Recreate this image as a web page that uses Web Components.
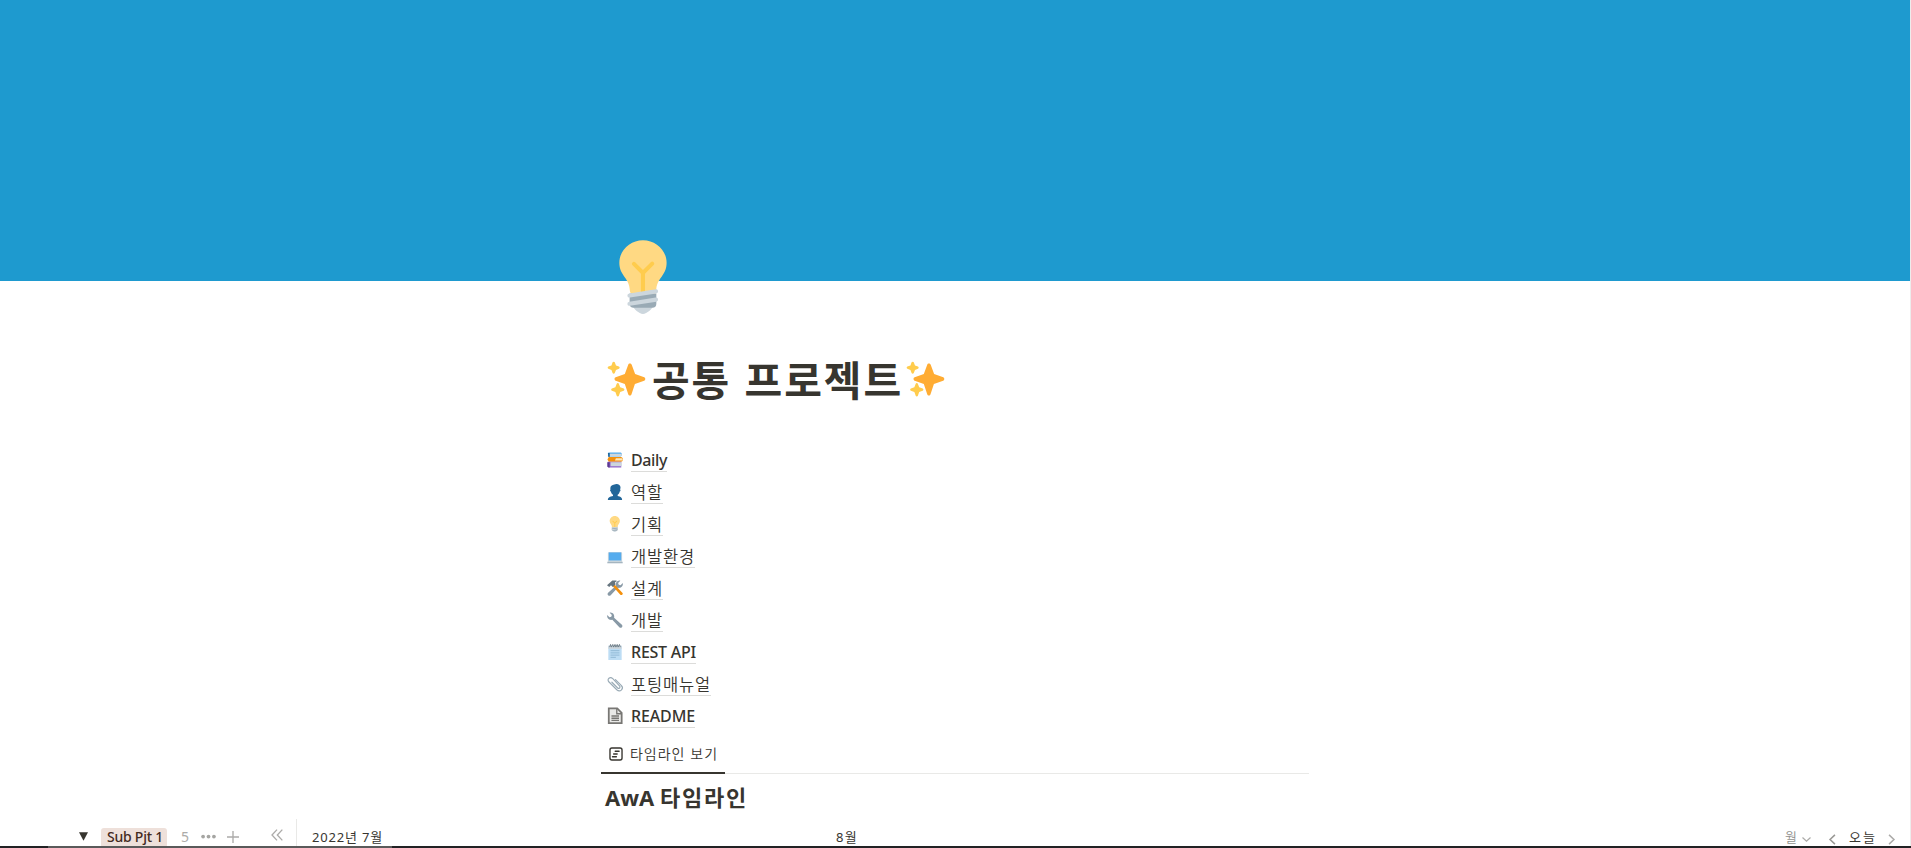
<!DOCTYPE html>
<html lang="ko"><head><meta charset="utf-8"><title>공통 프로젝트</title>
<style>
html,body{margin:0;height:100%;overflow:hidden;background:#fff}
body{font-family:"Noto Sans","Noto Sans CJK KR",sans-serif;color:#37352f}
</style></head><body>
<project-page></project-page>
<script>
const define=(name,html,setup)=>{
  const t=document.createElement('template');t.innerHTML=html;
  customElements.define(name,class extends HTMLElement{
    connectedCallback(){
      if(this.shadowRoot)return;
      this.attachShadow({mode:'open'}).append(t.content.cloneNode(true));
      if(setup)setup(this,this.shadowRoot);
    }
  });
};
const bulb='<path fill="#ffd983" d="M29 11.06c0 6.44-5 7.44-5 13.44 0 3.1-3.3 3.5-6.5 3.5-2.1 0-6.4-.8-6.4-3.5C11.1 18.5 6 17.5 6 11.06 6 5.03 11.3.14 17.5.14S29 5.03 29 11.06z"/><path fill="#ccd6dd" d="M22.2 32.5c0 .8-2.8 3.5-4.7 3.5s-4.7-2.7-4.7-3.5c0-.8 2.8-.5 4.7-.5s4.7-.3 4.7.5z"/><path fill="#ffcc4d" d="M22.7 10.8a1 1 0 0 0-1.4 0l-3.8 3.8-3.8-3.8a1 1 0 0 0-1.4 1.4l4.2 4.2V27h2V16.400l4.200-4.200a1 1 0 0 0 0-1.400z"/><path fill="#99aab5" d="M24 31a2 2 0 0 1-2 2h-9a2 2 0 0 1-2-2v-5h13z"/><path fill="#ccd6dd" d="M11 32a1 1 0 0 1-.16-2l12.870-2a1 1 0 0 1 .3 2l-12.840 2zm0-4a1 1 0 0 1-.16-2l12.870-2a1 1 0 0 1 .3 2l-12.840 2z"/>';
const wrench='<path fill="#8899a6" d="M27.700 34.300c2 2 4.500 1.500 5.800 0 1.500-1.500 1.800-4 0-5.800L16 13c1-4-.5-8.500-4-10.500-2-1.500-4.500-1.500-6-1l5 5-1.500 4-4 1.500-5-5c-.5 2-.3 4.500 1 6.500 2 3.500 6.500 5 10.500 4z"/>';
const icons={
bulb,
sparkles:'<path fill="#ffac33" d="m34.300 16.900-8.900-3.300-3.300-8.900C21.700 3.900 21.100 3.400 20.300 3.400s-1.400.5-1.600 1.200l-3.300 9-8.900 3.300c-.7.200-1.100.8-1.100 1.600s.4 1.400 1.100 1.600l8.900 3.300 3.300 9.900c.2.700.9 1.200 1.600 1.200s1.400-.5 1.600-1.200l3.300-9.900 9-3.300c.700-.2 1.100-.900 1.100-1.600s-.4-1.400-1-1.600z"/><path fill="#ffcc4d" d="M14.300 27.800 10.900 26.500 9.600 23.100c-.3-.9-1.800-.9-2.100 0L6.200 26.500l-3.400 1.300c-.9.300-.9 1.800 0 2.100l3.400 1.300 1.300 3.600c.3.900 1.800.9 2.100 0l1.300-3.600 3.400-1.300c.9-.3.9-1.800 0-2.100zM9.700 6.400 6.800 5.300 5.600 2.300c-.3-.9-1.800-.9-2.100 0L2.400 5.300-.6 6.400c-.9.300-.9 1.800 0 2.100l3 1.200 1.100 3c.3.900 1.800.9 2.100 0l1.200-3 2.900-1.200c.9-.3.9-1.800 0-2.100z"/>',
books:'<path fill="#55acee" d="M3 1h28l2 2v5l-2 2H5L2 8z"/><path fill="#ccd6dd" d="M6 4h27v5H6z"/><path fill="#226699" d="M2 2h4v9H3z"/><path fill="#f4900c" d="M4 11h28l4 3-1 6-3 2H4l-3-5z"/><path fill="#ffe8b6" d="M20 14h15v5H18z"/><path fill="#9266cc" d="M2 22h30v13H4l-3-3V24z"/><path fill="#ccd6dd" d="M8 23h25v9H8z"/><path fill="#5c3b91" d="M1 23h5v12H3l-2-3z"/>',
person:'<path fill="#226699" d="M24 26.800v-2.600c2.200-1.300 4.200-4.100 4.600-7.300.700-.1 1.600-1 1.800-2.500.200-1.400-.5-2-1-2.100.600-1.400 1-2.700 1-4.200 0-5-4-8.100-9-8.100-2 0-3.500.5-4.800 1.200C11 2 7.500 5 7.500 9.300c0 1 .2 2 .5 3-.6.100-1.300.9-1.100 2.200.2 1.400 1.100 2.300 1.800 2.400.5 3.200 2.500 6 4.800 7.300v2.600C7 28 2 29.500 2 36h32c0-6.500-4-8-10-9.200z"/>',
laptop:'<path fill="#ccd6dd" d="M34 30H2l-2 3c0 1 1 2 2 2h32c1 0 2-1 2-2z"/><path fill="#99aab5" d="M2 31h32l1 2H1z"/><path fill="#ccd6dd" d="M4 9h28l2 2v19H2V11z"/><path fill="#55acee" d="M4 10h28v18H4z"/>',
tools:'<g transform="matrix(-1 0 0 1 36 0)">'+wrench+'</g><path fill="#f4900c" d="m13 14 4-4 18 19c2 2-2 7-5 4z"/><path fill="#66757f" d="M0 12 12 1h9l1 2-4 2 1 5-6 6-4-4-4 4z"/>',
wrench,
notepad:'<path fill="#bdddf4" d="M3 4h30v32H3z"/><path fill="#ccd6dd" d="M3 4h30v7H3z"/><path stroke="#8cb4d2" stroke-width="2" d="M8 15h20M8 20h20M8 25h20M8 30h12"/><path stroke="#66757f" stroke-width="2" fill="none" d="m6 7 2-6 2 6 3-6 2 6 3-6 2 6 3-6 2 6 3-6 2 6"/>',
clip:'<path fill="none" stroke="#99aab5" stroke-width="2.600" stroke-linecap="round" d="M11 14l13 13c4 3 7-2 4-5L13 6C7 0-1 7 4 13l18 18c8 7 17-3 10-10L19 8"/>',
page:'<path fill="#e9e9e7" stroke="#787774" stroke-width="4" d="M4 1h19l10 10v23H4z"/><path fill="none" stroke="#787774" stroke-width="3" d="M22 2v11h11M10 18h17M10 23h17M10 28h17"/>',
timeline:'<rect x="2.500" y="2.500" width="31" height="31" rx="5" fill="none" stroke="#37352f" stroke-width="3.500"/><path stroke="#37352f" stroke-width="3.500" stroke-linecap="round" d="M16 11h10M12 18h9M9 25h10"/>',
tri:'<path fill="#37352f" d="M0 1h36L18 35z"/>',
dots:'<g fill="#a5a5a2"><circle cx="5" cy="18" r="4.500"/><circle cx="18" cy="18" r="4.500"/><circle cx="31" cy="18" r="4.500"/></g>',
plus:'<path stroke="#acaba9" stroke-width="4" d="M18 0v36M0 18h36"/>',
dleft:'<path fill="none" stroke="#acaba9" stroke-width="4" d="M18 2 3 18l15 16M34 2 19 18l15 16"/>',
down:'<path fill="none" stroke="#acaba9" stroke-width="5" d="m2 10 16 15 16-15"/>',
left:'<path fill="none" stroke="#999895" stroke-width="5" d="M26 3 10 18l16 15"/>',
right:'<path fill="none" stroke="#acaba9" stroke-width="5" d="m10 3 16 15-16 15"/>'};
define('ui-icon','<style>:host{display:block;flex:none;width:var(--s,16px);height:var(--s,16px)}svg{display:block;width:100%;height:100%;overflow:visible}</style><svg viewBox="0 0 36 36"></svg>',(h,r)=>{
  r.querySelector('svg').innerHTML=icons[h.getAttribute('name')]||'';
  if(h.hasAttribute('size'))h.style.setProperty('--s',h.getAttribute('size')+'px');
});
/* A label that tracks its letters out to fill a given advance width. */
define('set-label','<style>:host{display:block;flex:none;white-space:pre}span{display:inline-block}</style><span><slot></slot></span>',(h,r)=>{
  const w=+h.getAttribute('w'),s=r.querySelector('span'),n=[...h.textContent].length;
  h.style.width=w+'px';
  s.style.letterSpacing=(w-s.getBoundingClientRect().width)/n+'px';
});
define('page-link',`<style>
:host{display:flex;height:32px;align-items:flex-start;font-size:16px;line-height:24px}
ui-icon{margin:6px 8px 0 0}
.t{height:24px;margin-top:2px;border-bottom:1px solid #dcdcda;box-sizing:border-box;font-weight:500}
:host([ko]) .t{font-family:"Noto Sans CJK KR",sans-serif;font-weight:350;font-size:16.500px}
</style><ui-icon></ui-icon><div class="t"></div>`,(h,r)=>{
  const i=document.createElement('ui-icon');i.setAttribute('name',h.getAttribute('icon'));
  r.querySelector('ui-icon').replaceWith(i);
  const l=document.createElement('set-label');l.textContent=h.getAttribute('label');l.setAttribute('w',h.getAttribute('w'));
  r.querySelector('.t').append(l);
});
define('page-cover','<style>:host{display:block;height:281px;margin-right:1px;background:#1e9acf}</style>');
define('page-title',`<style>:host{display:flex;align-items:center;height:60px;font:700 41px/60px "Noto Sans CJK KR",sans-serif}
set-label{margin:0 5px 0 6px}</style><ui-icon name="sparkles" size="37"></ui-icon><set-label w="251">공통 프로젝트</set-label><ui-icon name="sparkles" size="37"></ui-icon>`);
define('view-tabs',`<style>:host{display:block;width:708px;height:34px;box-sizing:border-box;border-bottom:1px solid #e9e9e7}
div{display:flex;width:124px;height:34px;box-sizing:border-box;border-bottom:2px solid #37352f;padding:0 0 0 8px;font:350 14px/20px "Noto Sans CJK KR",sans-serif}
ui-icon{margin:7px 7px 0 0}set-label{margin-top:3px}</style><div><ui-icon name="timeline" size="14"></ui-icon><set-label w="88">타임라인 보기</set-label></div>`);
define('timeline-bar',`<style>
:host{display:flex;height:27px;align-items:flex-start;font-size:14px;line-height:20px}
ui-icon,set-label{margin-left:var(--l,0);margin-top:var(--t,0)}
.chip{margin:9px 0 0 13px;height:20px;width:66px;border-radius:3px;background:#eee0da;color:#442a1e;font-weight:500;box-sizing:border-box;padding-left:6px}
.chip set-label{margin-top:-1px}
.rule{width:1px;height:28px;background:#e9e9e7;margin-left:13px}
.ko{font-family:"Noto Sans","Noto Sans CJK KR",sans-serif;font-size:13px;line-height:18px}
</style>
<ui-icon name="tri" size="9" style="--l:79px;--t:13px"></ui-icon>
<div class="chip"><set-label w="56">Sub Pjt 1</set-label></div>
<set-label w="8" style="--l:14px;--t:8px;color:#acaba9">5</set-label>
<ui-icon name="dots" size="15" style="--l:12px;--t:10px"></ui-icon>
<ui-icon name="plus" size="12" style="--l:11px;--t:12px"></ui-icon>
<ui-icon name="dleft" size="12" style="--l:32px;--t:10px"></ui-icon>
<div class="rule"></div>
<set-label class="ko" w="71" style="--l:15px;--t:9px">2022년 7월</set-label>
<set-label class="ko" w="22" style="--l:453px;--t:9px">8월</set-label>
<set-label class="ko" w="14" style="--l:927px;--t:9px;color:#91918e;font-weight:350">월</set-label>
<ui-icon name="down" size="9" style="--l:3px;--t:16px"></ui-icon>
<ui-icon name="left" size="11" style="--l:16px;--t:15px"></ui-icon>
<set-label class="ko" w="28" style="--l:11px;--t:9px">오늘</set-label>
<ui-icon name="right" size="11" style="--l:9px;--t:15px"></ui-icon>`);
define('project-page',`<style>
:host{display:flex;flex-direction:column;width:1911px;height:848px;overflow:hidden;box-sizing:border-box;position:relative}
.edge{position:absolute;right:0;top:0;width:1px;height:846px;background:#ededec}
.body{margin-left:601px;height:538px}
.hero{position:absolute;left:607px;top:240px}
page-title{margin:67px 0 0 8px}
nav{margin:38px 0 0 6px}
h2{margin:6px 0 0 4px;font:700 22px/34px "Noto Sans","Noto Sans CJK KR",sans-serif;display:flex}
.foot{height:2px;background:linear-gradient(90deg,#222224 48px,#5a5a5a 48px,#5a5a5a 392px,#222224 392px);position:relative}
</style>
<page-cover></page-cover><div class="hero"><ui-icon name="bulb" size="74"></ui-icon></div><div class="edge"></div>
<div class="body"><page-title></page-title>
<nav>
<page-link icon="books" label="Daily" w="36"></page-link>
<page-link ko icon="person" label="역할" w="32"></page-link>
<page-link ko icon="bulb" label="기획" w="32"></page-link>
<page-link ko icon="laptop" label="개발환경" w="64"></page-link>
<page-link ko icon="tools" label="설계" w="32"></page-link>
<page-link ko icon="wrench" label="개발" w="32"></page-link>
<page-link icon="notepad" label="REST API" w="65"></page-link>
<page-link ko icon="clip" label="포팅매뉴얼" w="80"></page-link>
<page-link icon="page" label="README" w="64"></page-link>
</nav>
<view-tabs style="margin-top:6px"></view-tabs>
<h2><set-label w="55">AwA </set-label><set-label w="88">타임라인</set-label></h2></div>
<timeline-bar></timeline-bar><div class="foot"></div>`);
</script></body></html>
